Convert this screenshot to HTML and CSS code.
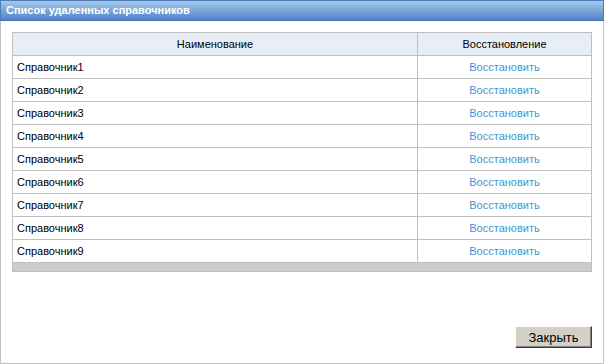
FILE: index.html
```html
<!DOCTYPE html>
<html>
<head>
	<title>Список удаленных справочников</title>
	<link rel="stylesheet" href="styles.css">
</head>
<body>
	<div class="window">
		<div class="title">Список удаленных справочников</div>

		<div class="content">
			<table class="grid">
				<tr>
					<th class="col-name">Наименование</th>
					<th class="col-restore">Восстановление</th>
				</tr>
				<tr><td>Справочник1</td><td class="restore"><a href="#">Восстановить</a></td></tr>
				<tr><td>Справочник2</td><td class="restore"><a href="#">Восстановить</a></td></tr>
				<tr><td>Справочник3</td><td class="restore"><a href="#">Восстановить</a></td></tr>
				<tr><td>Справочник4</td><td class="restore"><a href="#">Восстановить</a></td></tr>
				<tr><td>Справочник5</td><td class="restore"><a href="#">Восстановить</a></td></tr>
				<tr><td>Справочник6</td><td class="restore"><a href="#">Восстановить</a></td></tr>
				<tr><td>Справочник7</td><td class="restore"><a href="#">Восстановить</a></td></tr>
				<tr><td>Справочник8</td><td class="restore"><a href="#">Восстановить</a></td></tr>
				<tr><td>Справочник9</td><td class="restore"><a href="#">Восстановить</a></td></tr>
			</table>
			<div class="grid-footer"></div>

			<div class="buttons">
				<button class="close">Закрыть</button>
			</div>
		</div>
	</div>
</body>
</html>
```

FILE: styles.css
```css
body {
	margin: 0;
	padding: 0;
	background-color: #fff;
	font-family: "Liberation Sans", Arial, sans-serif;
	font-size: 11px;
}

.window {
	width: 604px;
	height: 364px;
	box-sizing: border-box;
	display: flex;
	flex-direction: column;
}

.title {
	height: 21px;
	box-sizing: border-box;
	border: 1px solid #4f7cbd;
	border-bottom-color: #4571b3;
	background: linear-gradient(#a3c9ea, #7aa6da 50%, #5283c6);
	color: #fff;
	font-weight: bold;
	font-size: 11px;
	line-height: 19px;
	padding-left: 5px;
}

.content {
	flex: 1;
	display: flex;
	flex-direction: column;
	border: 1px solid #c0c0c0;
	border-top: none;
	padding: 11px 11px 15px 11px;
}

.grid {
	width: 580px;
	border-collapse: collapse;
	table-layout: fixed;
}

.grid th,
.grid td {
	border: 1px solid #c0c0c0;
	height: 22px;
	padding: 0 4px;
	font-size: 11px;
	color: #000;
	white-space: nowrap;
}

.grid th {
	background-color: #e8eef7;
	font-weight: normal;
	text-align: center;
}

.col-name {
	width: 396px;
}

.restore {
	text-align: center;
}

.restore a {
	color: #4696cf;
	text-decoration: none;
}

.grid-footer {
	width: 580px;
	height: 9px;
	box-sizing: border-box;
	background-color: #cccccc;
	border: 1px solid #c0c0c0;
	border-top: none;
	border-bottom-color: #bdbdbd;
}

.buttons {
	margin-top: auto;
	display: flex;
	justify-content: flex-end;
}

.close {
	width: 77px;
	height: 22px;
	box-sizing: border-box;
	background-color: #d4d0c8;
	border: 1px solid;
	border-color: #ffffff #404040 #404040 #ffffff;
	box-shadow: inset -1px -1px 0 #808080;
	font-family: "Liberation Sans", Arial, sans-serif;
	font-size: 13px;
	color: #000;
	padding: 0;
	cursor: pointer;
}
```
